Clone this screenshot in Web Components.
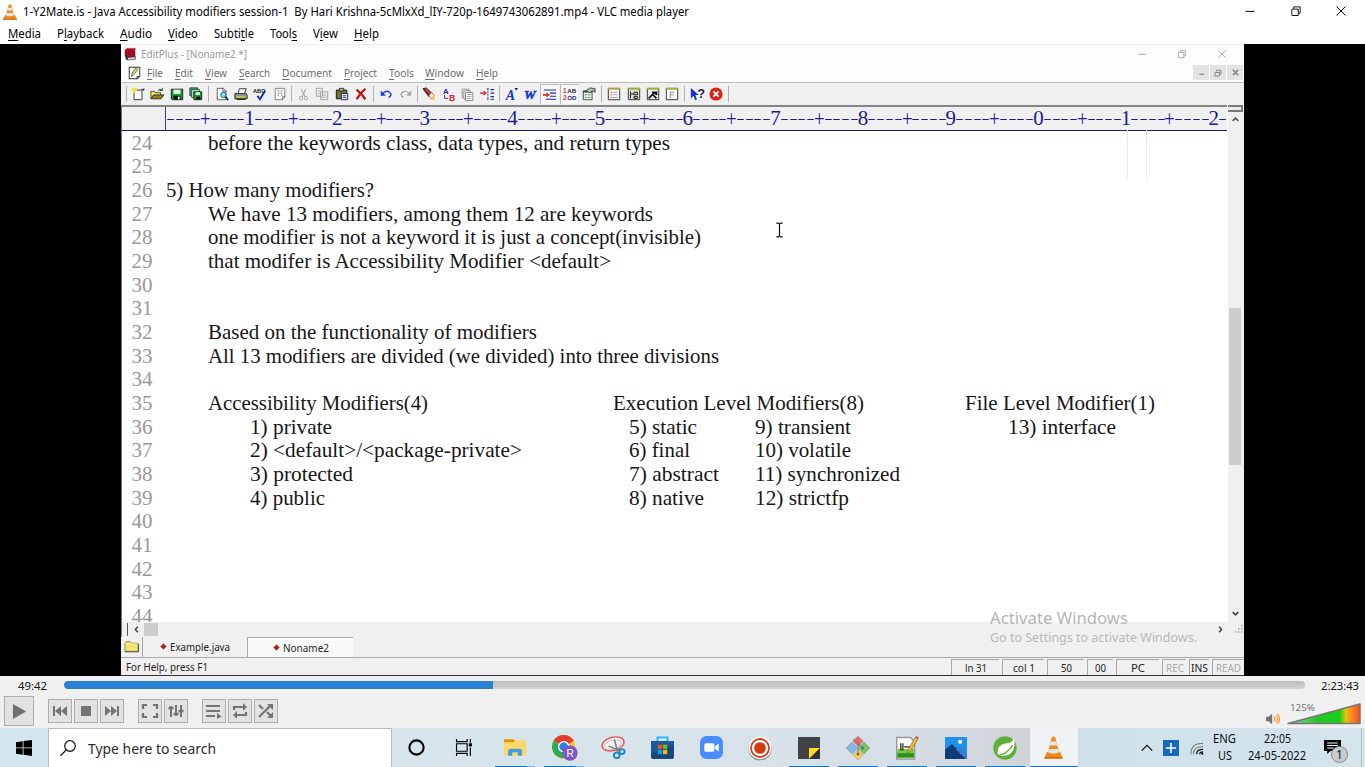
<!DOCTYPE html>
<html lang="en"><head><meta charset="utf-8"><title>VLC media player</title>
<style>
html,body{margin:0;width:1365px;height:767px;overflow:hidden;background:#000;font-family:"Noto Sans","Open Sans",sans-serif}
body{display:flex;flex-direction:column}
</style></head><body>
<vlc-header></vlc-header>
<video-stage><edit-plus></edit-plus></video-stage>
<vlc-controls></vlc-controls>
<task-bar></task-bar>
<script>
const ICONS={
cone:`<path d="M3 11h10l2 4.5H1z" fill="#f08a1c"/><path d="M1 14.6h14v1.2H1z" fill="#d96b08"/><path d="M6.8.5h2.4L12.5 12q-4.5 2-9 0z" fill="#f58a1f"/><path d="M6 3.8h4l.8 2.8H5.2zM4.5 9h7l.8 2.3q-4.3 1.8-8.6 0z" fill="#e6e8ea"/>`,
book:`<path d="M3 2.5L14 1v12l-10 2z" fill="#222"/><path d="M5 12l9-1v3l-9 1z" fill="#ddd" stroke="#222" stroke-width=".7"/><path d="M2 3.500L5 1h9l-1 10H4L2 9z" fill="#a30f28"/><path d="M3 3l2-1.500h9" stroke="#e06a78" fill="none"/><path d="M3 9l1 5" stroke="#222" stroke-width="1.500"/>`,
note:`<path d="M1.500 1.500h13v10l-3 3h-10z" fill="#fff" stroke="#333" stroke-width="1.200"/><path d="M4 12l1-4 5-6 2 2-5 6z" fill="#e3e35a" stroke="#333" stroke-width=".8"/><path d="M14 12h-3v3" stroke="#333" fill="none"/>`,
new:`<path d="M3.500 3.500h9v11h-9z" fill="#fff" stroke="#222"/><path d="M12 2h4l-2 2.500z" fill="#123"/><path d="M3 0v7M0 3.500h7M.8 1l4.500 5M5.500 1L1 6" stroke="#eee84a" stroke-width="1.300"/>`,
open:`<path d="M1 13V5h4l1 1.500h6V9" fill="#f3ea80" stroke="#443f00"/><path d="M1 13.500L4 9h12l-3.500 4.500z" fill="#8c8418" stroke="#222"/><path d="M9 4q2-3 5 0m0-3v3h-3" stroke="#222" fill="none"/>`,
save:`<path d="M1.500 2.500h13v12h-12l-1-1z" fill="#12a035" stroke="#111"/><path d="M4 3h8v5H4z" fill="#e8ece8"/><path d="M4 10h8v4H4z" fill="#111"/><path d="M9 11h2v3H9z" fill="#fff"/>`,
saveall:`<path d="M1 1h9v9H1z" fill="#48b064" stroke="#225"/><path d="M3 3h9v9H3z" fill="#bfe0c4" stroke="#164"/><path d="M5.500 5.500h9v9h-9z" fill="#12a035" stroke="#111"/><path d="M7.500 6h5v3h-5z" fill="#eee"/><path d="M8 11h5v3H8z" fill="#111"/>`,
preview:`<path d="M2.500 1.500h7l3 3v10h-10z" fill="#fff" stroke="#555"/><path d="M9 1v4h4" fill="none" stroke="#555"/><circle cx="9.500" cy="9" r="3" fill="#85e4f0" stroke="#256"/><path d="M12 11l3 4" stroke="#135" stroke-width="2"/>`,
print:`<path d="M5 7l1-5h8l-2 5" fill="#fff" stroke="#222"/><path d="M1 7.500h13l1 2v4H1z" fill="#90968a" stroke="#222"/><path d="M3 11.500h10" stroke="#c9dc38" stroke-width="1.500"/><path d="M3 14h10" stroke="#222" stroke-width="1.500"/>`,
abc:`<text x="0" y="6.500" font-size="6.500" font-weight="700" fill="#222">ABC</text><path d="M5 10l3 4 6-10" fill="none" stroke="#12209c" stroke-width="2"/>`,
hdoc:`<path d="M2.500 1.500h11v10l-3 3h-8z" fill="#fafafa" stroke="#777"/><path d="M14 11h-3v4" stroke="#777" fill="none"/><path d="M6 4v6M10 4v6M6 7h4M5 4h2M9 4h2M5 10h2M9 10h2" stroke="#999" stroke-width=".8"/>`,
cut:`<path d="M5 1l5 10M11 1L6 11" stroke="#999" stroke-width="1.200"/><circle cx="5" cy="12.500" r="2" fill="none" stroke="#999"/><circle cx="11" cy="12.500" r="2" fill="none" stroke="#999"/>`,
copy:`<g fill="#f5f5f5" stroke="#999"><path d="M1.500 1.500h7v9h-7zM6.500 5.500h8v9h-8z"/><path d="M3 4h4M3 6h3M3 8h3M8 8h5M8 10h5M8 12h5" stroke-width=".7"/></g>`,
paste:`<path d="M1.500 3.500h12v10h-12z" fill="#75702e" stroke="#111"/><path d="M5 1.500h5v3H5z" fill="#bbb" stroke="#222"/><path d="M7.500 7.500h7v7h-7z" fill="#e8f0ff" stroke="#125"/><path d="M9 10h4M9 12h4" stroke="#345"/>`,
del:`<path d="M3 3q5 4 10 11M13 2Q7 7 3 14" fill="none" stroke="#c40c0c" stroke-width="2.600"/>`,
undo:`<path d="M4 8q4-5 8-2 4 3-1 6" fill="none" stroke="#2438d8" stroke-width="1.700"/><path d="M2 4v6h6z" fill="#2438d8"/>`,
redo:`<path d="M12 8Q8 3 4 6q-4 3 1 6" fill="none" stroke="#999" stroke-width="1.300"/><path d="M14 4v6H8z" fill="#aaa"/>`,
torch:`<path d="M1 2l4-1 6 6-3 4z" fill="#51232a" stroke="#222"/><path d="M4 2l5 6" stroke="#e94735" stroke-width="2"/><path d="M8 10l3-4 3 4-3 4z" fill="#fff5d0" stroke="#a44" stroke-width=".8"/><path d="M11 15h4v-5z" fill="#f2e84b"/>`,
ab:`<text x="1" y="8" font-size="9" font-weight="700" fill="#1b2494">A</text><text x="8" y="15.500" font-size="10" font-weight="700" fill="#d22735">B</text><path d="M3 9v4h4" stroke="#1b2494" fill="none"/>`,
docs:`<g fill="#fff" stroke="#777"><path d="M1.500 1.500h8v10h-8z"/><path d="M3.500 3.500h8v10h-8z"/><path d="M5.500 5.500h9v10h-9z"/></g><path d="M7 8h6M7 10.500h6M7 13h6" stroke="#6a8a74" stroke-width=".8"/>`,
goto:`<path d="M0 7h6" stroke="#e52a1c" stroke-width="1.500"/><path d="M4 4l4 3-4 3z" fill="#e52a1c"/><path d="M8 2h2M8 14h2M9 2v12" stroke="#1d2b91" stroke-dasharray="2 1"/><path d="M12 3h4M12 7h4M12 11h4M12 14h4" stroke="#1d2b91" stroke-width="1.200"/>`,
fa:`<text x="2" y="14.500" font-family="Liberation Serif" font-size="16" font-style="italic" font-weight="700" fill="#1435cf">A</text><path d="M12 1h4l-2 3z" fill="#113"/>`,
fw:`<text x="0" y="14" font-family="Liberation Serif" font-size="15" font-style="italic" font-weight="700" fill="#1435cf" stroke="#1435cf" stroke-width=".6">W</text>`,
indent:`<path d="M1 3.500h14M8 7h7M8 10.500h7M3 14h12" stroke="#1e2a91" stroke-width="1.200"/><path d="M0 9h5" stroke="#e32c20" stroke-width="2"/><path d="M4 6l4 3-4 3z" fill="#e32c20"/>`,
nums:`<text x="1" y="7" font-size="7.500" font-weight="700" fill="#d33">1</text><text x="6" y="7" font-size="7" font-weight="700" fill="#223">AB</text><text x="1" y="14.800" font-size="7.500" font-weight="700" fill="#d33">2</text><text x="6" y="14.800" font-size="7" font-weight="700" fill="#228">OD</text>`,
props:`<path d="M1.500 5.500h10v9h-10z" fill="#f3fff5" stroke="#333"/><path d="M1 5h11" stroke="#333" stroke-width="2"/><path d="M3 9h2M3 12h2" stroke="#3a7" stroke-width="1.500"/><path d="M6 9h4M6 12h4" stroke="#777"/><path d="M5 4l4-3 6 1v4l-3-2-3 3z" fill="#b5c0a1" stroke="#243"/>`,
win1:`<path d="M1.500 1.500h13v13h-13z" fill="#fff" stroke="#222"/><path d="M1 2h14" stroke="#aaa434" stroke-width="2"/><path d="M4 6h2M4 9h2M4 12h2" stroke="#c33"/><path d="M7 6h5M7 9h5M7 12h5" stroke="#999"/>`,
win2:`<path d="M1.500 1.500h13v13h-13z" fill="#ddd" stroke="#222"/><path d="M1 2h14" stroke="#aaa434" stroke-width="2"/><path d="M4 5v8M4 8h4M8 6h4v3H8zM8 11h4v2H8z" stroke="#111" fill="#cce05b"/>`,
win3:`<path d="M1.500 1.500h13v13h-13z" fill="#eee" stroke="#222"/><path d="M1 2h14" stroke="#aaa434" stroke-width="2"/><path d="M3 13l7-7M7 6h5v3M8 9l4 4" stroke="#111" stroke-width="2"/>`,
win4:`<path d="M1.500 1.500h13v13h-13z" fill="#fff" stroke="#222"/><path d="M1 2h14" stroke="#aaa434" stroke-width="2"/><path d="M6 13V6h5M6 9h4" fill="none" stroke="#888"/>`,
help:`<path d="M1 1v12l3-3 2 5 2-1-2-5h4z" fill="#162ddb"/><text x="8.500" y="13" font-size="14" font-weight="800" fill="#223">?</text>`,
stop:`<circle cx="8" cy="8" r="7.500" fill="#de2015"/><path d="M5 5l6 6M11 5l-6 6" stroke="#fff" stroke-width="2"/>`,
play:`<path d="M1 1l14 7-14 7z" fill="#707070"/>`,
prev:`<path d="M1 3h2v10H1zM9 3v10L3 8zM15 3v10L9 8z" fill="#747474"/>`,
sq:`<path d="M3 3h10v10H3z" fill="#747474"/>`,
next:`<path d="M13 3h2v10h-2zM1 3v10l6-5zM7 3v10l6-5z" fill="#747474"/>`,
full:`<path d="M1 6V2h4M11 2h4v4M15 10v4h-4M5 14H1v-4" fill="none" stroke="#747474" stroke-width="2.200"/>`,
eq:`<path d="M3 3v11M8 2v11M13 2v12" stroke="#747474" stroke-width="2"/><path d="M.5 5h5M5.500 11h5M10.500 8h5" stroke="#747474" stroke-width="2.400"/>`,
list:`<path d="M0 3h14M0 8h14M0 13h9" stroke="#747474" stroke-width="2.200"/><path d="M11 10l4.500 3.500L11 16z" fill="#747474"/>`,
loop:`<path d="M2 7V4h10M14 9v3H4" fill="none" stroke="#747474" stroke-width="2.200"/><path d="M11 0l4 4-4 4zM5 8l-4 4 4 4z" fill="#747474"/>`,
rand:`<path d="M1 2l4 4M1 14L12 3M9 9l4 4" fill="none" stroke="#747474" stroke-width="2.200"/><path d="M9 1h6v6zM9 15h6V9z" fill="#747474"/>`,
speaker:`<path d="M0 5h3l4-4v14l-4-4H0z" fill="#747474"/><path d="M9 5q2 3 0 6M11 3q4 5 0 10M13 1q5 7 0 14" fill="none" stroke="#ff9d2a" stroke-width="1.400"/>`,
win:`<path d="M0 2.200l6.700-1v6.300H0zM7.500 1.100L16 0v7.500H7.500zM0 8.300h6.700v6.400L0 13.800zM7.500 8.300H16V16l-8.500-1.200z" fill="#000"/>`,
mag:`<circle cx="10" cy="6" r="5.300" fill="none" stroke="#111" stroke-width="1.200"/><path d="M6.300 9.900L.5 15.700" stroke="#111" stroke-width="1.300"/>`,
ring:`<circle cx="8" cy="8" r="6.700" fill="none" stroke="#000" stroke-width="2"/>`,
tview:`<path d="M.5 0v2.500h10V0M.5 16v-2.500h10V16M.5 4.500h10v7H.5zM13.500 0v3.500M13.500 8v8" fill="none" stroke="#000" stroke-width="1.100"/><path d="M12 4h3v3h-3z"/>`,
folder:`<path d="M0 1h7l1.500 2H16v10H0z" fill="#d79a05"/><path d="M0 3.500h7L8.500 2H16v13H0z" fill="#ffd766"/><path d="M3 15v-4q0-2 2-2h6q2 0 2 2v4h-3v-3H6v3z" fill="#3c9de8"/>`,
chrome:`<circle cx="7.500" cy="7.500" r="7.500" fill="#fcc934"/><path d="M7.500 7.500L1 3.700A7.500 7.500 0 0 1 14 3.700z" fill="#e33b2e"/><path d="M1 3.700a7.500 7.500 0 0 0 6 11.300l3-5-3-2z" fill="#2da94f"/><circle cx="7.500" cy="7.500" r="3.700" fill="#fff"/><circle cx="7.500" cy="7.500" r="2.800" fill="#2c7de9"/><circle cx="11.500" cy="11.500" r="4.900" fill="#7e57c2"/><text x="9.300" y="13.800" font-size="6.500" fill="#fff">R</text>`,
snip:`<ellipse cx="8" cy="5.500" rx="7.500" ry="4.600" transform="rotate(-16 8 5.500)" fill="#f5f1f2" stroke="#e65a5a" stroke-width="1"/><ellipse cx="8" cy="6" rx="5.800" ry="3.100" transform="rotate(-16 8 6)" fill="none" stroke="#ccc" stroke-width=".7"/><path d="M9 2.500l2 8.500M5 7l7 3" stroke="#777"/><circle cx="10.500" cy="13.500" r="1.900" fill="none" stroke="#1789c9" stroke-width="1.300"/><circle cx="14" cy="10.800" r="1.700" fill="none" stroke="#1789c9" stroke-width="1.300"/>`,
store:`<path d="M4.500 4V1h7v3" fill="none" stroke="#26b5f5" stroke-width="1.300"/><path d="M0 3.500h16V14q0 2-2 2H2q-2 0-2-2z" fill="#185a9d"/><path d="M0 12l16-6v8q0 2-2 2H2q-2 0-2-2z" fill="#1b3866" opacity=".6"/><path d="M4.700 6h3v3h-3z" fill="#f25022"/><path d="M8.300 6h3v3h-3z" fill="#7fba00"/><path d="M4.700 9.600h3v3h-3z" fill="#00a4ef"/><path d="M8.300 9.600h3v3h-3z" fill="#ffb900"/>`,
zoom:`<rect width="16" height="16" rx="4.500" fill="#4a8cff"/><rect x="3" y="5" width="7" height="6" rx="1.300" fill="#fff"/><path d="M10.500 7.200L13 5.300v5.400l-2.500-1.900z" fill="#fff"/>`,
rec:`<circle cx="8" cy="8.600" r="7.600" fill="#666"/><circle cx="8" cy="8" r="7.600" fill="#fff"/><circle cx="8" cy="8" r="6" fill="none" stroke="#c9441d" stroke-width="1.200"/><circle cx="8" cy="8" r="3.900" fill="#d23a10"/>`,
sticky:`<path d="M0 0h16v8l-8 8H0z" fill="#424242"/><path d="M8 8h8l-8 8z" fill="#ffdc1c"/><path d="M16 8v8H8z" fill="#333"/>`,
git:`<g stroke="#999" stroke-width=".4"><path d="M8 0l3.500 3.500L8 7 4.500 3.500z" fill="#ee6b6b"/><path d="M4 4l3.700 4L4 12 0 8z" fill="#80b5ee"/><path d="M12 4l4 4-4 4-4-4z" fill="#76c75c"/><path d="M8 9l3.500 3.500L8 16l-3.500-3.500z" fill="#f4d258"/></g><path d="M5 2l6 6M8 5v7" stroke="#777" stroke-width=".7"/><circle cx="8" cy="12" r="1" fill="#666"/><circle cx="11" cy="8" r="1" fill="#666"/>`,
npp:`<path d="M.5 1h10l3 3v12H.5z" fill="#fff" stroke="#999"/><path d="M1 9h12v6H1z" fill="#76c83b"/><path d="M1 12h12v3H1z" fill="#27931a"/><path d="M3.500 5v5M5 5v5M6 7.500h4" stroke="#222" stroke-width=".9"/><path d="M8.500 12l.5-3L14 1l2 1-5 8z" fill="#efb52d" stroke="#865" stroke-width=".5"/><path d="M14 1l1-1 1.500 1L16 2z" fill="#d34e55"/>`,
photos:`<path d="M0 0h16v16H0z" fill="#1e91e9"/><path d="M0 9l5-4 11 11H0z" fill="#0d3c78"/><path d="M8 9l3-2 5 5v4h-1z" fill="#3a7ccd"/><circle cx="11" cy="3.500" r="1.500" fill="#fff"/>`,
spring:`<circle cx="8" cy="8" r="7.800" fill="#5fb038"/><path d="M14 2q-2 3-6 3-5 1-5 6 0 2 1 2 7 1 9-3 2-3 1-8z" fill="#fff"/><path d="M3 13q7-1 10-7" stroke="#5fb038" stroke-width="1" fill="none"/>`,
chev:`<path d="M2 11l6-6 6 6" fill="none" stroke="#111" stroke-width="1.400"/>`,
plus:`<path d="M0 0h16v16H0z" fill="#1769c0"/><path d="M8 3v10M3 8h10" stroke="#fff" stroke-width="1.600"/>`,
wifi:`<g fill="none" stroke="#777" stroke-width="1.200"><path d="M1 15Q1 2 15 3"/><path d="M4 15Q4 6 15 6.500"/></g><g fill="none" stroke="#111" stroke-width="1.300"><path d="M7.500 15q0-5.500 7.500-5.500"/><path d="M11 15q0-2.500 4-2.500"/></g><circle cx="14" cy="14.500" r="1.300"/>`,
notif:`<path d="M0 1h16v11H6l-3 3v-3H0z" fill="#000"/><path d="M3 4h10M3 6.500h10M3 9h6" stroke="#fff"/>`,
min:`<path d="M2 8.500h12" stroke="currentColor" stroke-width="1.300"/>`,
rest:`<path d="M2.500 5.500h8.500v8.500H2.500zM5 5V2.500h8.500V11H11" fill="none" stroke="currentColor" stroke-width="1.200"/>`,
close:`<path d="M2 2l12 12M14 2L2 14" stroke="currentColor" stroke-width="1.300"/>`,
mmin:`<path d="M3 12h11" stroke="currentColor" stroke-width="3"/>`,
mrest:`<path d="M2 7h9v7H2zM5 5V2.500h9V10h-2" fill="none" stroke="currentColor" stroke-width="2"/>`,
mclose:`<path d="M2 2l12 12M14 2L2 14" stroke="currentColor" stroke-width="3.500"/>`,
left:`<path d="M10.500 3L6 8l4.500 5" stroke="#444" stroke-width="2.800" fill="none"/>`,
right:`<path d="M5.500 3L10 8l-4.500 5" stroke="#444" stroke-width="2.800" fill="none"/>`,
up:`<path d="M3 10.500L8 5.500l5 5" stroke="#555" stroke-width="2.800" fill="none"/>`,
down:`<path d="M3 5.500L8 10.500l5-5" stroke="#444" stroke-width="2.800" fill="none"/>`,
yfold:`<path d="M1 4l1.500-2h4L8 4h7v10H1z" fill="#f1e66b" stroke="#8c8640"/><path d="M2 5h12" stroke="#fff9b8"/><path d="M1 14.500h14.500V5" stroke="#444" fill="none"/>`,
dia:`<path d="M8 1l7 7-7 7-7-7z" fill="#c21b17" stroke="#888"/>`,
ibeam:`<path d="M5 1h2l1 1 1-1h2M5 14h2l1-1 1 1h2M8 2v11" fill="none" stroke="#111" stroke-width="1.100"/>`,
grip:`<path d="M12 3h2v2h-2zM12 7h2v2h-2zM12 11h2v2h-2zM8 7h2v2H8zM8 11h2v2H8zM4 11h2v2H4z" fill="#aaa"/>`
};
const make=(name,css,html,after)=>customElements.define(name,class extends HTMLElement{
  constructor(){super();const r=this.attachShadow({mode:'open'});r.innerHTML=`<style>*{box-sizing:border-box}${css}</style>${typeof html==='function'?html(this):html}`;}
  connectedCallback(){after&&after(this)}
});
const I=(n,s=16,h=s,st='')=>`<ui-icon name="${n}" s="${s}" h="${h}" style="${st}"></ui-icon>`;
const F=(t,w,st='')=>`<fit-text w="${w}" style="${st}">${t}</fit-text>`;
const MENU=(items)=>items.map(([t,w,m])=>F(t.replace(/_(.)/,'<u>$1</u>'),w,`margin-left:${m}px`)).join('');

make('vlc-header',`:host{display:block;height:44px;background:#fff;color:#000}
.t,.m{display:flex;align-items:center}.t{height:23px;font-size:12px;padding-left:2px}.m{height:21px;font-size:12px}
.b{margin-left:auto;display:flex;gap:33.500px;padding-right:18px;padding-bottom:2px}`,
`<div class="t">${I('cone',16)}${F('1-Y2Mate.is - Java Accessibility modifiers session-1  By Hari Krishna-5cMlxXd_lIY-720p-1649743062891.mp4 - VLC media player',666,'margin-left:5px')}
<div class="b">${I('min',12)}${I('rest',12)}${I('close',12)}</div></div>
<div class="m">${MENU([['_Media',33,8],['P_layback',47,16],['_Audio',32,16],['_Video',30,16],['Subti_tle',40,16],['Tool_s',27,16],['V_iew',25,16],['_Help',25,16]])}</div>`);

make('video-stage',`:host{display:flex;height:632px;background:#000;padding-left:121px}`,`<slot></slot>`);

const TOOLS='new open save saveall | preview print abc hdoc | cut copy paste del | undo redo | torch ab docs goto | fa fw indent nums props | win1 win2 win3 win4 | help stop |'.split(' ');
const SEPW=[6.500,4,6,4.500,5,6.500,5,6];let si=0;
make('tool-bar',`:host{display:flex;height:23px;background:#f0f0f0;border-top:1px solid #bbb;align-items:center;padding-left:3px}
i{display:flex;justify-content:center;height:16px}i::before{content:"";width:1px;background:#b0b0b0}
b{display:flex;width:19.300px;height:21px;align-items:center;justify-content:center}b.on{background:#f8f8f8;border:1px solid #bbb;border-right-color:#eee;border-bottom-color:#eee}`,
()=>'<i style="width:4.500px"></i>'+TOOLS.map(t=>t==='|'?`<i style="width:${SEPW[si++]}px"></i>`:`<b class="${t==='indent'||t==='nums'?'on':''}">${I(t,t==='docs'||t==='cut'?13:14)}</b>`).join(''));

const ruler=()=>{let s='';for(let k=1;k<=121;k++)s+=`<span class="${k%10===0?'':k%5===0?'p':'d'}">${k%10===0?[1,2,3,4,5,6,7,8,9,0,1,2][k/10-1]:k%5===0?'+':'-'}</span>`;return s};
make('column-ruler',`:host{display:flex;height:26px;border-top:2px solid #858585;border-bottom:1.500px solid #14205f;border-left:1px solid #777;background:#f0f0f0;width:1106px;font:21px/22px "Liberation Serif",serif;color:#1c1c88}
.g{width:44px;flex:none;border-right:1px solid #3a3a98;margin-right:.2px}span{width:8.781px;flex:none;display:flex;justify-content:center}.d{transform:scale(1.200,.6);transform-origin:50% 12px}.p{transform:scale(.9,1.100);transform-origin:50% 12px}`,()=>`<div class="g"></div>${ruler()}`);

const LINES={24:[['before the keywords class, data types, and return types',208,462]],
26:[['5) How many modifiers?',166,208]],27:[['We have 13 modifiers, among them 12 are keywords',208,445]],
28:[['one modifier is not a keyword it is just a concept(invisible)',208,493]],29:[['that modifer is Accessibility Modifier &lt;default&gt;',208,403]],
32:[['Based on the functionality of modifiers',208,329]],33:[['All 13 modifiers are divided (we divided) into three divisions',208,511]],
35:[['Accessibility Modifiers(4)',208,220],['Execution Level Modifiers(8)',613,251],['File Level Modifier(1)',965,190]],
36:[['1) private',250,82],['5) static',629,68],['9) transient',755,96],['13) interface',1008,108]],
37:[['2) &lt;default&gt;/&lt;package-private&gt;',250,272],['6) final',629,61],['10) volatile',755,96]],
38:[['3) protected',250,103],['7) abstract',629,90],['11) synchronized',755,145]],
39:[['4) public',250,75],['8) native',629,75],['12) strictfp',755,94]]};
const lines=()=>{let s='';for(let n=24;n<=44;n++){let x=153,r=F(n,21,'color:#989898;margin-left:9.500px');for(const [t,a,w] of LINES[n]||[]){r+=F(t,w,`margin-left:${a-x}px`);x=a+w}s+=`<div class="l">${r}</div>`}return s};
make('text-editor',`:host{display:flex;flex:1;min-height:0;background:#fff;color:#161616;font:21px/23.680px "Liberation Serif",serif;border-left:1.500px solid #777}
.c{width:1105.500px;overflow:hidden;padding-top:.6px}.l{display:flex;height:23.680px}`,()=>`<div class="c">${lines()}</div><v-scroll></v-scroll>`);
make('v-scroll',`:host{display:flex;flex-direction:column;align-items:center;width:16px;background:#f0f0f0;margin-top:-20px;padding-top:4px}
p{margin:184px 2px 0 0;width:12px;height:157px;background:#cdcdcd}`,`${I('up',9)}<p></p>${I('down',9,9,'margin-top:144px')}`);

make('editor-foot',`:host{display:block;background:#f0f0f0;height:54px;font-size:11.500px;color:#222}
.h,.t,.s{display:flex;align-items:center}.h{height:15px;padding-left:5px;border-left:1px solid #777}.br{width:1px;height:13px;background:#555;margin-right:4px}.th{width:15px;height:13px;background:#cdcdcd;margin-left:3px}
.t{height:21px;border-bottom:1.500px solid #aaa}.tab{height:20px;display:flex;align-items:center;gap:3px;justify-content:center}
.s{height:18px;border-bottom:1.500px solid #333;padding-left:5px;gap:3px}.c{height:16px;margin-top:2px;border-left:1px solid #aaa;border-top:1px solid #aaa;display:flex;align-items:center;justify-content:center}`,
`<div class="h"><div class="br"></div>${I('left',9)}<div class="th"></div>${I('right',9,9,'margin-left:1058px')}${I('grip',12,12,'margin-left:7px')}</div>
<div class="t">${I('yfold',15,13,'margin-left:3px')}<div class="tab" style="width:105px;margin-left:3px;border-left:1px solid #aaa">${I('dia',7)}${F('Example.java',60)}</div><div class="tab" style="width:106px;background:#fafafa;border:1px solid #aaa;border-right:0;border-bottom:0">${I('dia',7)}${F('Noname2',46)}</div></div>
<div class="s">${F('For Help, press F1',82)}<div style="flex:1"></div>${[['ln 31',22,48],['col 1',22,42],['50',11,37],['00',11,26],['PC',14,43],['REC',18,24,1],['INS',17,20],['READ',25,32,1]].map(a=>`<div class="c" style="width:${a[2]}px;${a[3]?'color:#aaa':''}">${F(a[0],a[1])}</div>`).join('')}</div>`);

make('edit-plus',`:host{display:flex;flex-direction:column;position:relative;width:1123px;height:630.500px;background:#fdfdfd;color:#6c6c6c;font-size:11px;border-top:1px solid #eee}
.t,.m{display:flex;align-items:center}.t{height:18px;padding-left:2px;color:#9a9a9a}.m{height:19px;padding-left:7px}.t fit-text,.t .b{margin-top:-1px}.m fit-text{margin-top:-.5px}
.b{margin-left:auto;display:flex;gap:30px;padding-right:17px}.d{margin-left:auto;display:flex;gap:1px;padding-right:1px}.d b{display:flex;width:16px;height:15px;background:#e3e3e6;align-items:center;justify-content:center;color:#888}
.o{position:absolute}`,
`<div class="t">${I('book',14)}${F('EditPlus - [Noname2 *]',106,'margin-left:4px')}<div class="b">${I('min',10)}${I('rest',10)}${I('close',10)}</div></div>
<div class="m">${I('note',13,14)}${MENU([['_File',16,6],['_Edit',18,12],['_View',22,12],['_Search',31,12],['_Document',50,12],['_Project',33,12],['_Tools',25,12],['_Window',39,11],['_Help',22,12]])}<div class="d"><b>${I('mmin',7)}</b><b>${I('mrest',8)}</b><b>${I('mclose',7)}</b></div></div>
<tool-bar></tool-bar><column-ruler></column-ruler><text-editor></text-editor><editor-foot></editor-foot>
<div class="o" style="left:1107px;top:60px;width:15px;height:7px;background:#eee;border:1px solid #777;border-width:2px 2px 2px 0"></div>
<div class="o" style="left:1006px;top:85px;width:20px;height:49px;border:1px solid #e8e8e8;border-width:0 1px"></div>
<div class="o" style="left:650px;top:177px">${I('ibeam',17)}</div>
<div class="o" style="left:869px;top:562px;color:#b5b5b5;font-size:16px;line-height:22px">${F('Activate Windows',138)}</div>
<div class="o" style="left:869px;top:584px;color:#b9b9b9;font-size:12px;line-height:18px">${F('Go to Settings to activate Windows.',207)}</div>`);

make('vlc-controls',`:host{display:block;height:52px;background:#f0f0f0;color:#111;font-size:11.500px}
.p{display:flex;align-items:center;height:18px;padding-left:18px}.bar{width:1241px;height:8.500px;border-radius:4px;background:linear-gradient(#bebebe,#d2d2d2);overflow:hidden;margin:0 16px 0 17px}.bar div{height:100%;width:429px;background:#2a80d2;border-radius:4px 0 0 4px}
.c{display:flex;align-items:center;height:34px;padding-left:4px;gap:2px}.c b{display:flex;width:24px;height:24px;border:1px solid #adadad;background:#e2e2e2;align-items:center;justify-content:center}.c b.g{margin-left:12px}.c b.big{width:30px;height:30px}
.v{margin-left:auto;display:flex;align-items:flex-end;padding-right:4px;height:28px}.vol{margin-left:7px;width:74px;height:24px;position:relative}.vol fit-text{position:absolute;left:3px;top:0;font-size:9.500px;color:#777}`,
`<div class="p">${F('49:42',29)}<div class="bar"><div></div></div>${F('2:23:43',38)}</div>
<div class="c"><b class="big">${I('play',15,17)}</b><b class="g">${I('prev')}</b><b>${I('sq')}</b><b>${I('next')}</b><b class="g">${I('full')}</b><b>${I('eq')}</b><b class="g">${I('list')}</b><b>${I('loop')}</b><b>${I('rand')}</b>
<div class="v">${I('speaker',14,12)}<div class="vol"><svg width="74" height="24"><defs><linearGradient id="v"><stop offset="0" stop-color="#98d898"/><stop offset=".4" stop-color="#24c52c"/><stop offset=".72" stop-color="#19d019"/><stop offset=".8" stop-color="#e3c50e"/><stop offset=".9" stop-color="#ff8020"/><stop offset="1" stop-color="#f5501c"/></linearGradient></defs><path d="M1 22.500L73 3V22.500z" fill="url(#v)" stroke="#777" stroke-width="1.500" stroke-linejoin="round"/></svg>${F('125%',25)}</div></div></div>`);

const APPS=[['folder',22,19,3],['chrome',25,25,3],['snip',24,23],['store',23,23],['zoom',23,23],['rec',24,24],['sticky',22,22,1],['git',24,24,1],['npp',22,23,1],['photos',22,22,1],['spring',24,24,1],['cone',21,23,2]];
make('task-bar',`:host{display:flex;height:39px;background:linear-gradient(90deg,#d3e5ed 0,#d7e5ea 45%,#d7dfe7 65%,#cfd3d7 76%,#cfe1ea 80%,#d3e4eb);color:#111}
.st{width:48px;display:flex;align-items:center;justify-content:center}.se{width:343.500px;background:#fff;border:1px solid #bbb;border-width:1px 1px 0;display:flex;align-items:center;padding-left:11px;font-size:14.500px;color:#2b2b2b}
.a{width:49px;display:flex;flex-direction:column;align-items:center;justify-content:center;position:relative}.a.r::after{content:"";position:absolute;bottom:0;left:4.500px;width:40px;height:1.300px;background:#0b78d0}.a.w::after{background:linear-gradient(90deg,#0b78d0 80%,#6fb3e3 80%)}.a.on{background:#eff3f6;width:48.500px}.a.on::after{left:0;width:48.500px}
.tr{margin-left:auto;display:flex;align-items:center;font-size:12px;line-height:17px;width:221px}.col{display:flex;flex-direction:column;align-items:center;padding-bottom:1px}
.n{position:relative;margin-left:18px;margin-top:-1px;display:flex}.n b{position:absolute;left:7px;top:7px;width:17px;height:17px;border-radius:50%;background:#c7cbcf;border:1px solid #888;font:12px/15px "Noto Sans";text-align:center}.end{width:1px;height:39px;background:#aeb8be;margin-left:auto;margin-right:3px}`,
`<div class="st">${I('win',16)}</div><div class="se">${I('mag',16)}${F('Type here to search',128,'margin-left:12px')}</div>
<div class="a">${I('ring',17)}</div><div class="a">${I('tview',17,17,'margin-right:2px')}</div>
${APPS.map((a,i)=>`<div class="a ${a[3]?'r':''} ${a[3]===2?'on':''} ${a[3]===3?'w':''}" ${i?'':'style="margin-left:1px"'}>${I(a[0],a[1],a[2])}</div>`).join('')}
<div class="tr">${I('chev',14,14,'margin-left:-4px')}${I('plus',16,16,'margin-left:9px')}${I('wifi',14,14,'margin-left:11px')}
<div class="col" style="margin-left:9px">${F('ENG',23)}${F('US',14)}</div><div class="col" style="margin-left:12px">${F('22:05',27)}${F('24-05-2022',58)}</div>
<div class="n">${I('notif',17,16)}<b>1</b></div><div class="end"></div></div>`);

make('ui-icon',`:host{display:inline-flex;flex:none}svg{display:block;overflow:visible}`,el=>`<svg width="${el.getAttribute('s')}" height="${el.getAttribute('h')}" viewBox="0 0 16 16" preserveAspectRatio="none" font-family="Liberation Sans,sans-serif">${ICONS[el.getAttribute('name')]}</svg>`);
// Squeezes or stretches its slotted text to the width given in "w".
make('fit-text',`:host{display:block;flex:none;white-space:pre}span{display:inline-block;transform-origin:0 50%}::slotted(u){text-underline-offset:2px;text-decoration-thickness:1px}`,`<span><slot></slot></span>`,el=>{
  const w=+el.getAttribute('w'),s=el.shadowRoot.querySelector('span');el.style.width=w+'px';s.style.transform='none';
  const n=s.getBoundingClientRect().width;if(n)s.style.transform=`scaleX(${w/n})`;
});
</script></body></html>
